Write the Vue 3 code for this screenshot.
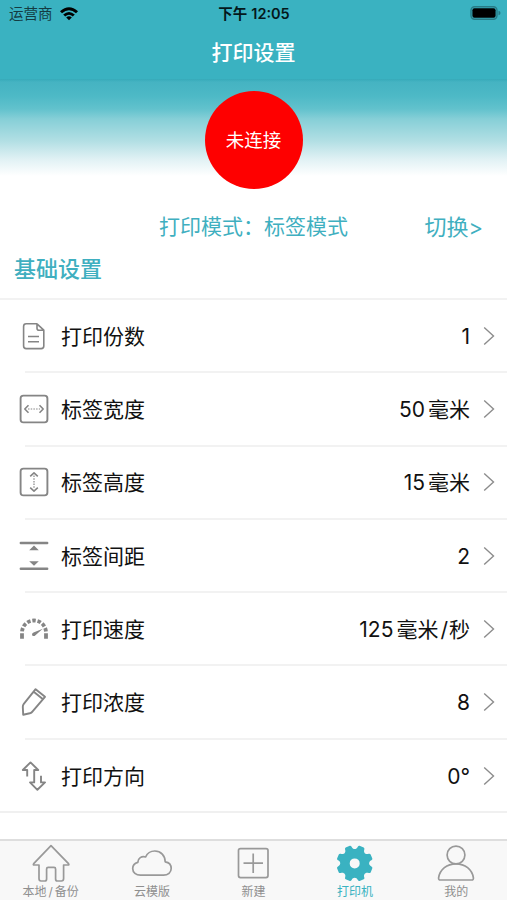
<template>
  <div class="page">
    <header class="header">
      <div class="status">
        <div class="carrier">
          <span>运营商</span>
          <svg class="wifi" viewBox="0 0 20 15">
            <path d="M1 5.2Q10 -2.8 19 5.2L17 7.3Q10 1 3 7.3Z" />
            <path d="M4.2 8.4Q10 3.4 15.8 8.4L13.8 10.4Q10 7.2 6.2 10.4Z" />
            <path d="M7.2 11.4Q10 9 12.8 11.4L10 14.2Z" />
          </svg>
        </div>
        <div class="clock">下午<span class="time">12:05</span></div>
        <div class="battery-wrap">
          <svg class="battery" viewBox="0 0 31 14">
            <rect class="shell" x="1" y="0.8" width="26" height="12.4" rx="3.6" />
            <rect x="2.4" y="2.2" width="23.2" height="9.6" rx="2" />
            <path class="cap" d="M28.5 4.8Q30.5 5.3 30.5 7T28.5 9.2Z" />
          </svg>
        </div>
      </div>
      <h1 class="title">打印设置</h1>
    </header>

    <section class="hero">
      <div class="connect">未连接</div>
    </section>

    <div class="mode">
      <span class="mode-text">打印模式：标签模式</span>
      <span class="switch">切换&gt;</span>
    </div>

    <h2 class="section">基础设置</h2>

    <ul class="list">
      <li v-for="row in rows" :key="row.label" class="row">
        <svg class="row-icon" viewBox="0 0 32 32">
          <template v-if="row.icon === 'file'">
            <path d="M19 3.8H8.2Q5.6 3.8 5.6 6.4V26Q5.6 28.6 8.2 28.6H23.2Q25.8 28.6 25.8 26V10.2L19 3.8V8.2Q19 10.2 21 10.2H25.8" />
            <path d="M10 16.5H21M10 21.8H21" />
          </template>
          <template v-else-if="row.icon === 'width'">
            <rect class="frame" x="2.6" y="2.6" width="26.8" height="26.8" rx="2.8" />
            <path d="M10.5 12.2L6.8 16L10.5 19.8M21.5 12.2L25.2 16L21.5 19.8" />
            <path class="dots" d="M10 16H22" />
          </template>
          <template v-else-if="row.icon === 'height'">
            <rect class="frame" x="2.6" y="2.6" width="26.8" height="26.8" rx="2.8" />
            <path d="M12.2 10.3L16 6.8L19.8 10.3M12.2 21.7L16 25.2L19.8 21.7" />
            <path class="dots" d="M16 9.5V23" />
          </template>
          <template v-else-if="row.icon === 'gap'">
            <path class="bar" d="M2.8 3H29.2M2.8 28.7H29.2" />
            <path class="solid" d="M16 5.6L20.8 10.2H11.2ZM16 25.8L20.8 21.2H11.2Z" />
          </template>
          <template v-else-if="row.icon === 'speed'">
            <path class="gauge" d="M4 25.8V19.5A12 12 0 0 1 28 19.5V25.8" />
            <path class="solid" d="M24.8 15.8L16.6 22.9Q14 23.6 14 21.2Q14.2 19.9 15.5 19.4Z" />
          </template>
          <template v-else-if="row.icon === 'pencil'">
            <path class="heavy" d="M17.6 3.2L27 10.8L14.6 25.4Q13.6 26.8 11.8 27.3L5.2 28.8L4.8 20.8Q4.8 19 5.8 17.8ZM15.7 5.8L25 13.2" />
          </template>
          <template v-else>
            <path class="heavy" d="M9.2 16.4V10H4.8L12.5 2.4L20.2 10H16.2V22.4H12L19.4 29.8L27 22.4H23V15.8" />
          </template>
        </svg>
        <span class="label">{{ row.label }}</span>
        <span class="value">
          <span>{{ row.value }}</span>
          <span v-if="row.unit" class="unit">{{ row.unit }}</span>
          <template v-if="row.per">
            <span class="slash">/</span>
            <span>{{ row.per }}</span>
          </template>
        </span>
        <svg class="chevron" viewBox="0 0 12 20">
          <path d="M1.2 1.5L10.5 10L1.2 18.5" />
        </svg>
      </li>
    </ul>

    <nav class="tabs">
      <div v-for="tab in tabs" :key="tab.icon" class="tab" :class="{ active: tab.active }">
        <svg class="tab-icon" viewBox="0 0 44 40">
          <path
            v-if="tab.icon === 'home'"
            d="M22 2.6L39.5 20.6Q40.4 22 39 22H34.6V35.6Q34.6 38 32.4 38H28.4Q26.6 38 26.6 36V26Q26.6 24.4 25 24.4H19.2Q17.6 24.4 17.6 26V36Q17.6 38 15.8 38H12Q10 38 10 35.6V22H5.2Q3.8 22 4.7 20.6Z"
          />
          <path
            v-else-if="tab.icon === 'cloud'"
            d="M10.5 32.2H33.5C38 32.2 41.2 29.3 41.2 25.5C41.2 22 38.8 19.3 35.2 18.8C35.2 12.5 30.8 8 24.8 8C20.6 8 17.2 10.4 15.6 14C11.5 12.8 8 15.2 7.8 19.4C4.6 20.2 2.7 22.4 2.7 25.5C2.7 29.5 6 32.2 10.5 32.2Z"
          />
          <path
            v-else-if="tab.icon === 'plus'"
            d="M9.5 5.6H35Q37 5.6 37 7.6V32.6Q37 34.6 35 34.6H9.5Q7.5 34.6 7.5 32.6V7.6Q7.5 5.6 9.5 5.6ZM22.2 10.5V30M12.5 20.2H32"
          />
          <path v-else-if="tab.icon === 'gear'" class="gear" :d="gear" />
          <template v-else>
            <circle cx="22" cy="12" r="8.9" />
            <path d="M4.6 34.8C5.8 26.5 13 20.8 22 20.8S38.2 26.5 39.4 34.8Q39.6 37 37.6 37H6.4Q4.4 37 4.6 34.8Z" />
          </template>
        </svg>
        <span class="tab-label">{{ tab.label }}<template v-if="tab.suffix"><span class="tab-slash">/</span>{{ tab.suffix }}</template></span>
      </div>
    </nav>
  </div>
</template>

<script setup>
const rows = [
  { icon: 'file', label: '打印份数', value: '1' },
  { icon: 'width', label: '标签宽度', value: '50', unit: '毫米' },
  { icon: 'height', label: '标签高度', value: '15', unit: '毫米' },
  { icon: 'gap', label: '标签间距', value: '2' },
  { icon: 'speed', label: '打印速度', value: '125', unit: '毫米', per: '秒' },
  { icon: 'pencil', label: '打印浓度', value: '8' },
  { icon: 'direction', label: '打印方向', value: '0°' }
]

const tabs = [
  { icon: 'home', label: '本地', suffix: '备份' },
  { icon: 'cloud', label: '云模版' },
  { icon: 'plus', label: '新建' },
  { icon: 'gear', label: '打印机', active: true },
  { icon: 'user', label: '我的' }
]

// Eight-tooth gear with rounded valleys and a round hole
const gearPath = (cx, cy) => {
  const point = (r, deg) => {
    const a = (deg * Math.PI) / 180
    return `${(cx + r * Math.cos(a)).toFixed(2)} ${(cy + r * Math.sin(a)).toFixed(2)}`
  }
  let d = ''
  for (let i = 0; i < 8; i++) {
    const a = i * 45 + 22.5
    d += `${i ? 'L' : 'M'}${point(17, a - 12)}Q${point(18.3, a - 10.5)} ${point(18.3, a - 7)}`
    d += `L${point(18.3, a + 7)}Q${point(18.3, a + 10.5)} ${point(17, a + 12)}`
    d += `C${point(13.8, a + 15)} ${point(13.8, a + 30)} ${point(17, a + 33)}`
  }
  return `${d}ZM${cx - 5} ${cy}a5 5 0 1 0 10 0a5 5 0 1 0 -10 0Z`
}

const gear = gearPath(21.7, 20.4)
</script>

<style>
body {
  margin: 0;
  background: #fff;
}
</style>

<style scoped>
.page {
  display: flex;
  flex-direction: column;
  width: 507px;
  height: 900px;
  overflow: hidden;
  background: #fff;
  color: #111;
  font-family: Inter, "Noto Sans CJK SC", sans-serif;
}

.header {
  height: 79px;
  background: #3ab2c1;
}

.status {
  display: grid;
  grid-template-columns: 1fr auto 1fr;
  align-items: center;
  height: 27px;
  padding: 0 6px 0 9px;
  font-size: 14.5px;
  line-height: 27px;
}

.carrier {
  display: flex;
  align-items: center;
  gap: 6px;
  color: #143c42;
}

.wifi {
  width: 20px;
  height: 15px;
  margin-top: -1px;
  fill: #000;
}

.clock {
  margin-right: 2px;
  color: #04181b;
  font-weight: 600;
}

.time {
  margin-left: 4px;
  font-size: 14.5px;
}

.battery-wrap {
  display: flex;
  justify-content: flex-end;
}

.battery {
  width: 31px;
  height: 14px;
  margin-top: -1px;
}

.shell {
  fill: none;
  stroke: #277b86;
  stroke-width: 1.4;
}

.cap {
  fill: #277b86;
}

.title {
  margin: 0;
  color: #fff;
  font-size: 21px;
  font-weight: 500;
  line-height: 51px;
  text-align: center;
}

.hero {
  display: flex;
  justify-content: center;
  box-sizing: border-box;
  height: 121px;
  padding-top: 12px;
  background: linear-gradient(#36aab9 0, #45b3c2 3px, #4db9c6 17px, #62c2cd 30px, #86cfd7 40px, #b2dfe4 62px, #e0f1f4 80px, #fff 97px);
}

.connect {
  width: 98px;
  height: 98px;
  border-radius: 50%;
  background: #fe0000;
  color: #fff;
  font-size: 18.5px;
  line-height: 98px;
  text-align: center;
}

.mode {
  display: grid;
  grid-template-columns: 1fr auto 1fr;
  align-items: center;
  height: 50px;
  padding: 0 24px;
  box-sizing: border-box;
  color: #3fafc0;
  font-size: 21px;
}

.mode-text {
  grid-column: 2;
}

.switch {
  justify-self: end;
  font-size: 22px;
}

.section {
  height: 48px;
  margin: 0;
  padding-left: 14px;
  color: #3fafc0;
  font-size: 22px;
  font-weight: 500;
  line-height: 38px;
}

.list {
  margin: 0;
  padding: 0;
  border-top: 2px solid #f2f2f2;
  border-bottom: 2px solid #f0f0f0;
  list-style: none;
}

.row {
  display: flex;
  align-items: center;
  box-sizing: border-box;
  height: 73.3px;
  margin-left: 25px;
  padding-right: 12px;
  border-bottom: 2px solid #f2f2f2;
}

.row:last-child {
  height: 71.5px;
  border-bottom: none;
}

.row-icon {
  width: 32px;
  height: 32px;
  margin-left: -7px;
  fill: none;
  stroke: #858585;
  stroke-width: 1.6;
  stroke-linejoin: round;
}

.row-icon .frame {
  stroke-width: 1.9;
}

.row-icon .heavy {
  stroke-width: 1.9;
}

.row-icon .dots {
  stroke-width: 1.2;
  stroke-dasharray: 1.5 1.2;
}

.row-icon .bar {
  stroke-width: 2.4;
  stroke-linecap: round;
}

.row-icon .solid {
  fill: #858585;
  stroke: none;
}

.row-icon .gauge {
  stroke-width: 3.8;
  stroke-dasharray: 5.6 1.8 3.5 1.8 3.5 1.8 3.5 1.8 3.5 1.8 3.5 1.8 3.5 1.8 3.5 1.8 6;
}

.label {
  margin-left: 11px;
  padding-top: 2px;
  font-size: 21px;
  line-height: 30px;
}

.value {
  display: flex;
  flex: 1;
  align-items: baseline;
  justify-content: flex-end;
  padding-top: 2px;
  font-size: 21px;
  line-height: 30px;
}

.unit {
  margin-left: 3px;
}

.slash {
  margin: 0 1px 0 2px;
}

.chevron {
  width: 12px;
  height: 20px;
  margin-left: 13px;
  fill: none;
  stroke: #8c8c8c;
  stroke-width: 1.4;
}

.tabs {
  display: grid;
  grid-template-columns: repeat(5, 1fr);
  box-sizing: border-box;
  height: 61px;
  margin-top: auto;
  border-top: 2px solid #dedede;
  background: #f8f8f8;
}

.tab {
  display: flex;
  flex-direction: column;
  align-items: center;
  padding-top: 2px;
  color: #8f8f8f;
}

.tab-icon {
  flex: none;
  width: 44px;
  height: 40px;
  fill: none;
  stroke: #999;
  stroke-width: 1.7;
  stroke-linejoin: round;
}

.tab-label {
  font-size: 12px;
  line-height: 17px;
}

.tab-slash {
  margin: 0 2px;
}

.tab.active {
  color: #3ab2c1;
}

.gear {
  fill: #3ab2c1;
  fill-rule: evenodd;
  stroke: none;
}
</style>
